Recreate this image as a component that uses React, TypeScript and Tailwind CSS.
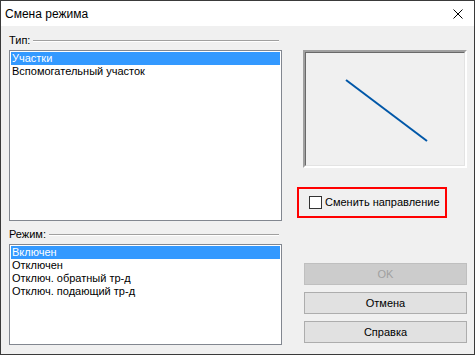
import { useState } from "react";

const typeItems = ["Участки", "Вспомогательный участок"];
const modeItems = [
  "Включен",
  "Отключен",
  "Отключ. обратный тр-д",
  "Отключ. подающий тр-д",
];

type ListProps = {
  items: string[];
  selected: number;
  onSelect: (i: number) => void;
  height: string;
};

function ListBox({ items, selected, onSelect, height }: ListProps) {
  return (
    <div className={`${height} border border-[#828790] bg-white p-px`}>
      {items.map((item, i) => (
        <div
          key={item}
          onClick={() => onSelect(i)}
          className={`h-[13px] px-px leading-[13px] whitespace-nowrap ${
            i === selected ? "bg-[#3399ff] text-white" : "text-black"
          }`}
        >
          {item}
        </div>
      ))}
    </div>
  );
}

function GroupLabel({ title }: { title: string }) {
  return (
    <div className="flex h-[13px] items-center gap-[3px] leading-[13px]">
      <span className="text-black">{title}</span>
      <div className="mr-[3px] mt-px h-[2px] flex-1 border-t border-b border-t-[#a0a0a0] border-b-white" />
    </div>
  );
}

export default function App() {
  const [typeIdx, setTypeIdx] = useState(0);
  const [modeIdx, setModeIdx] = useState(0);
  const [reverse, setReverse] = useState(false);

  return (
    <div
      className="flex h-[355px] w-[475px] flex-col border border-[#3a3a3a] bg-[#f0f0f0] text-[11px]"
      style={{ fontFamily: '"Liberation Sans", Arial, sans-serif' }}
    >
      {/* title bar */}
      <div className="flex h-[25px] shrink-0 items-center justify-between bg-white pl-[4px] pr-[10px]">
        <span className="text-[12px] text-black">Смена режима</span>
        <svg width="10" height="10" viewBox="0 0 10 10" className="mr-px">
          <path d="M0.5 0.5 L9.5 9.5 M9.5 0.5 L0.5 9.5" stroke="#000" strokeWidth="1" />
        </svg>
      </div>

      <div className="flex flex-1">
        {/* left column */}
        <div className="ml-[8px] flex w-[273px] flex-col pt-[8px]">
          <GroupLabel title="Тип:" />
          <div className="mt-[3px]">
            <ListBox
              items={typeItems}
              selected={typeIdx}
              onSelect={setTypeIdx}
              height="h-[171px]"
            />
          </div>
          <div className="mt-[7px]">
            <GroupLabel title="Режим:" />
          </div>
          <div className="mt-[3px]">
            <ListBox
              items={modeItems}
              selected={modeIdx}
              onSelect={setModeIdx}
              height="h-[101px]"
            />
          </div>
        </div>

        {/* right column */}
        <div className="ml-[21px] flex w-[164px] flex-col pt-[24px]">
          <div className="h-[118px] border-2 border-t-[#a0a0a0] border-l-[#a0a0a0] border-r-white border-b-white">
            <div className="h-full w-full border border-t-[#696969] border-l-[#696969] border-r-[#e3e3e3] border-b-[#e3e3e3]">
              <svg width="160" height="114" viewBox="0 0 160 114">
                <line x1="40" y1="27" x2="121" y2="88" stroke="#0057a8" strokeWidth="2" />
              </svg>
            </div>
          </div>

          <div className="-ml-[6px] mt-[19px] flex h-[31px] w-[150px] items-center border-2 border-[#ff0000] pl-[10px]">
            <button
              type="button"
              onClick={() => setReverse(!reverse)}
              className="flex items-center gap-[3px]"
            >
              <span className="flex h-[13px] w-[13px] items-center justify-center border border-[#333333] bg-white text-[10px] leading-none">
                {reverse ? "✓" : ""}
              </span>
              <span className="text-black">Сменить направление</span>
            </button>
          </div>

          <div className="ml-px mt-[45px] flex w-[163px] flex-col gap-[7px]">
            <button
              type="button"
              disabled
              className="h-[22px] border border-[#bfbfbf] bg-[#cccccc] text-[#a0a0a0]"
            >
              OK
            </button>
            <button
              type="button"
              className="h-[22px] border border-[#adadad] bg-[#e1e1e1] text-black"
            >
              Отмена
            </button>
            <button
              type="button"
              className="h-[22px] border border-[#adadad] bg-[#e1e1e1] text-black"
            >
              Справка
            </button>
          </div>
        </div>
      </div>
    </div>
  );
}
